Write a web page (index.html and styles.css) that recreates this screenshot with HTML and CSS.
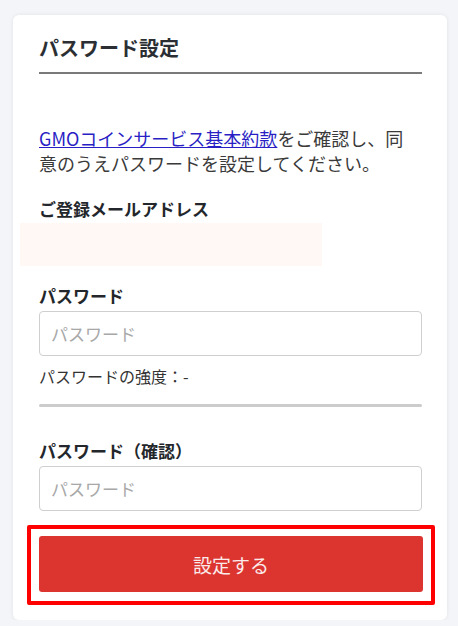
FILE: index.html
```html
<!DOCTYPE html>
<html lang="ja">
<head>
  <meta charset="UTF-8">
  <title>パスワード設定</title>
  <meta name="viewport" content="width=device-width, initial-scale=1">
  <link rel="stylesheet" href="styles.css">
</head>
<body>

  <div class="card">
    <h1>パスワード設定</h1>

    <p class="lead"><a href="#">GMOコインサービス基本約款</a>をご確認し、同意のうえパスワードを設定してください。</p>

    <label class="label">ご登録メールアドレス</label>
    <div class="mail"></div>

    <label class="label">パスワード</label>
    <input type="password" class="field" placeholder="パスワード">
    <div class="strength">パスワードの強度：-</div>
    <div class="bar"></div>

    <label class="label">パスワード（確認）</label>
    <input type="password" class="field" placeholder="パスワード">

    <div class="highlight">
      <button class="submit">設定する</button>
    </div>
  </div>

</body>
</html>
```

FILE: styles.css
```css
body {
  font-family: "Noto Sans CJK JP", "Noto Sans", sans-serif;
  background: #f4f5f8;
  color: #2b2f33;
  margin: 0;
  padding: 15px 11px 0 13px;
}

.card {
  background: white;
  border-radius: 6px;
  box-shadow: 0 0 4px rgba(0, 0, 0, 0.08);
  padding: 18px 25px 15px 26px;
  display: flex;
  flex-direction: column;
}

h1 {
  font-size: 20px;
  font-weight: bold;
  line-height: 30px;
  margin: 0;
  padding-bottom: 9px;
  border-bottom: 2px solid #7a7a7a;
}

.lead {
  font-size: 18px;
  line-height: 25px;
  margin: 52px 0 0;
  padding-right: 11px;
  color: #3a3a3a;
}

.lead a {
  color: #2a1fc4;
  text-decoration: underline;
}

.label {
  font-size: 17px;
  font-weight: bold;
  line-height: 24px;
  display: block;
  color: #23272b;
}

.lead + .label {
  margin-top: 21px;
}

.mail {
  background: #fff8f5;
  width: 302px;
  height: 43px;
  margin: 2px 0 0 -19px;
}

.mail + .label {
  margin-top: 18px;
}

.field {
  height: 45px;
  box-sizing: border-box;
  margin-top: 3px;
  padding: 0 11px;
  font-family: inherit;
  font-size: 17px;
  border: 1px solid #cfcfcf;
  border-radius: 4px;
  color: #333;
}

.field::placeholder {
  color: #a8a8a8;
}

.strength {
  font-size: 16px;
  line-height: 22px;
  margin-top: 9px;
  color: #333;
}

.bar {
  height: 3px;
  background: #cccccc;
  margin-top: 17px;
  border-radius: 2px;
}

.bar + .label {
  margin-top: 32px;
}

.highlight {
  border: 4px solid #ff0000;
  border-radius: 2px;
  margin: 14px -13px 0 -12px;
  padding: 7px 8px 9px 8px;
}

.submit {
  width: 100%;
  height: 56px;
  font-family: inherit;
  font-size: 19px;
  background: #dc3530;
  color: #fbeaea;
  border: none;
  border-radius: 3px;
  cursor: pointer;
}
```
